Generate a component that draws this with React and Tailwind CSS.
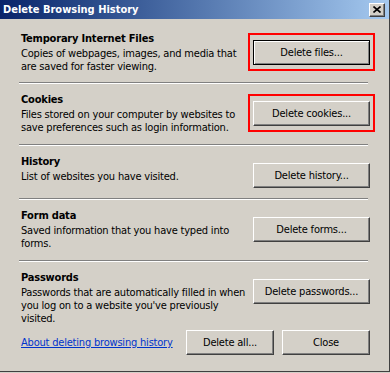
import React from "react";

const sections = [
  {
    title: "Temporary Internet Files",
    lines: ["Copies of webpages, images, and media that", "are saved for faster viewing."],
    button: "Delete files...",
    isDefault: true,
    marked: true,
    pb: "pb-[9px]",
  },
  {
    title: "Cookies",
    lines: ["Files stored on your computer by websites to", "save preferences such as login information."],
    button: "Delete cookies...",
    marked: true,
    pb: "pb-[10px]",
  },
  {
    title: "History",
    lines: ["List of websites you have visited."],
    button: "Delete history...",
    pb: "pb-[10px]",
  },
  {
    title: "Form data",
    lines: ["Saved information that you have typed into", "forms."],
    button: "Delete forms...",
    pb: "pb-[10px]",
  },
  {
    title: "Passwords",
    lines: [
      "Passwords that are automatically filled in when",
      "you log on to a website you've previously",
      "visited.",
    ],
    button: "Delete passwords...",
    pb: "pb-0",
  },
];

function WinButton({ children, isDefault, className = "" }) {
  // classic 3D button: white top-left, dark bottom-right
  return (
    <button
      type="button"
      className={`flex items-center justify-center bg-[#d4d0c8] text-black ${
        isDefault
          ? "border border-black shadow-[inset_1px_1px_0_#ffffff,inset_-1px_-1px_0_#808080]"
          : "border border-t-white border-l-white border-r-[#404040] border-b-[#404040] shadow-[inset_-1px_-1px_0_#808080]"
      } ${className}`}
    >
      {children}
    </button>
  );
}

function Section({ s, last }) {
  return (
    <>
      <div className={`flex items-start justify-between pl-[2px] ${s.pb}`}>
        <div>
          <div className="font-bold">{s.title}</div>
          <div className="mt-[2px]">
            {s.lines.map((l) => (
              <div key={l} className="whitespace-nowrap">
                {l}
              </div>
            ))}
          </div>
        </div>
        <div className="relative mt-[8px]">
          {/* red annotation box */}
          {s.marked && (
            <span className="absolute -left-[5px] -right-[5px] -top-[7px] -bottom-[6px] border-2 border-[#ff0000]" />
          )}
          <WinButton isDefault={s.isDefault} className="w-[117px] h-[25px]">
            {s.button}
          </WinButton>
        </div>
      </div>
      {!last && <div className="h-[2px] border-t border-[#808080] border-b border-b-white mr-[2px] mb-[9px]" />}
    </>
  );
}

export default function App() {
  return (
    <div className="w-[390px] h-[373px] bg-[#d4d0c8] font-['DejaVu_Sans_Condensed','DejaVu_Sans',Tahoma,sans-serif] text-[11px] leading-[13px] text-black">
      <div className="h-[372px] border-r border-b border-[#404040] flex flex-col">
        {/* Title bar */}
        <div className="h-[19px] flex items-center justify-between pl-[3px] pr-[4px] bg-gradient-to-r from-[#0a246a] to-[#a6caf0]">
          <span className="text-white font-bold">Delete Browsing History</span>
          <button
            type="button"
            className="w-[16px] h-[14px] flex items-center justify-center bg-[#d4d0c8] border border-t-white border-l-white border-r-[#404040] border-b-[#404040] shadow-[inset_-1px_-1px_0_#808080]"
          >
            <svg width="8" height="7" viewBox="0 0 8 7">
              <path d="M0.5 0.5L7.5 6.5M7.5 0.5L0.5 6.5" stroke="#000" strokeWidth="1.6" />
            </svg>
          </button>
        </div>

        <div className="flex flex-col pl-[19px] pr-[19px] pt-[13px] tracking-[-0.2px]">
          {sections.map((s, i) => (
            <Section key={s.title} s={s} last={i === sections.length - 1} />
          ))}

          <div className="flex items-center mt-[5px]">
            <a href="#" className="pl-[2px] text-[#0033cc] underline">
              About deleting browsing history
            </a>
            <div className="ml-auto flex gap-[8px]">
              <WinButton className="w-[88px] h-[25px]">Delete all...</WinButton>
              <WinButton className="w-[88px] h-[25px]">Close</WinButton>
            </div>
          </div>
        </div>
      </div>
    </div>
  );
}
